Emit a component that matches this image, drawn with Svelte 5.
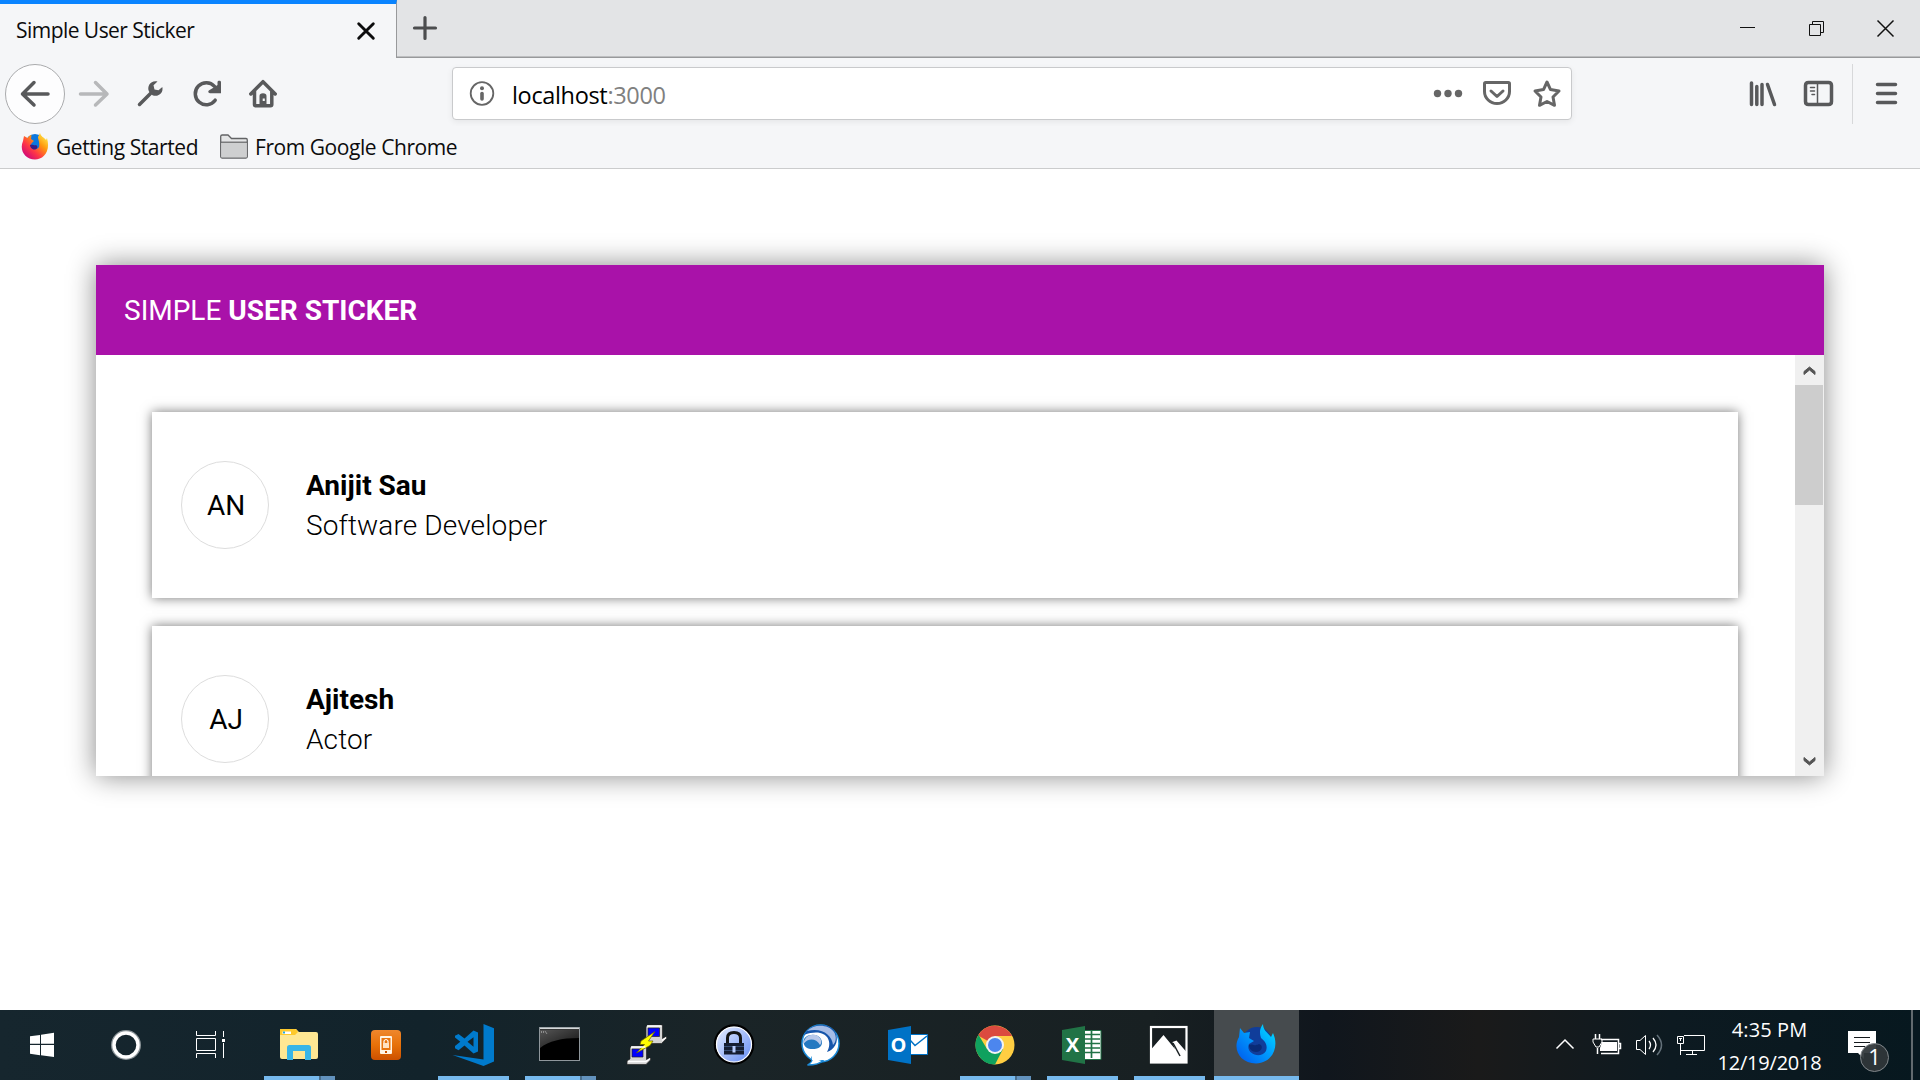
<script>
  const users = [
    { initials: 'AN', name: 'Anijit Sau', role: 'Software Developer' },
    { initials: 'AJ', name: 'Ajitesh', role: 'Actor' }
  ];
</script>

<div class="screen">
  <header class="tabs">
    <div class="tab">
      <span class="tab-title">Simple User Sticker</span>
      <svg class="tab-close" width="20" height="20" viewBox="356 20 20 20"><path d="M358.7 22.7 373.3 37.3M373.3 22.7 358.7 37.3" stroke="#0c0c0d" stroke-width="2.9" stroke-linecap="round" /></svg>
    </div>
    <svg class="new-tab" width="58" height="56" viewBox="397 0 58 56"><path d="M425 17.500V38.500M414.500 28H435.500" stroke="#4c4d4f" stroke-width="3.200" stroke-linecap="round" /></svg>
    <svg class="window-controls" width="200" height="56" viewBox="1720 0 200 56" fill="none" stroke="#111">
      <path d="M1740 27.500H1755M1809.500 24.500H1820.500V35.500H1809.500ZM1812.500 24V21.500H1823.500V32.500H1821" />
      <path d="M1877.500 20.500 1893.500 36.500M1893.500 20.500 1877.500 36.500" stroke-width="1.500" />
    </svg>
  </header>

  <nav class="toolbar">
    <div class="back"><svg width="34" height="34" viewBox="18 77 34 34"><path d="M22.500 94H48M34 82.500 22.500 94 34 105" /></svg></div>
    <svg class="disabled" width="57" height="60" viewBox="65 64 57 60"><path d="M80.500 94H106.500M95.500 82.500 107 94 95.500 105" /></svg>
    <svg width="57" height="60" viewBox="122 64 57 60"><path d="M139.500 104.500 152 92" /><path class="solid" d="M157.500 81.500C151 79.800 146.500 86 149 91.500L152.500 95.200C158 97.500 163.800 93 162.300 87L158.500 90.200 154.500 89.400 153.500 85.200Z" /></svg>
    <svg width="57" height="60" viewBox="179 64 57 60"><path d="M215.200 100.200A11 11 0 1 1 214.500 86.400" /><path class="solid" d="M221 82.200V93.200H210C208 93.200 207.700 91 209.200 90.300L212.500 88.300 217.500 85V82.200C217.500 80.400 221 80.400 221 82.200Z" /></svg>
    <svg width="57" height="60" viewBox="236 64 57 60"><path d="M250.800 94 263 81.700 275.200 94M254.500 91V104.500Q254.500 105.800 255.800 105.800H270.500Q271.800 105.800 271.800 104.500V91" /><path class="solid" fill-rule="evenodd" d="M259.500 105V96Q259.500 93.300 263 93.300T266.500 96V105ZM262.700 98.500H264.800V101H262.700Z" /></svg>
    <div class="address">
      <svg width="60" height="52" viewBox="452 68 60 52" fill="none"><circle cx="482" cy="93.500" r="11.300" class="ring" /><circle cx="482" cy="88.300" r="2" fill="#666" /><path class="stem" d="M482 93.500V99" /></svg>
      <span class="url">localhost<span>:3000</span></span>
      <svg class="actions" width="152" height="52" viewBox="1420 68 152 52">
        <circle cx="1437.500" cy="93.500" r="3.700" fill="#666" /><circle cx="1448" cy="93.500" r="3.700" fill="#666" /><circle cx="1458.500" cy="93.500" r="3.700" fill="#666" />
        <path d="M1485.700 82.500H1508.300Q1509.500 82.500 1509.500 83.700V91.500A12.500 12 0 0 1 1484.500 91.500V83.700Q1484.500 82.500 1485.700 82.500ZM1491 91 1497 96.500 1503 91" />
        <path d="M1547 82 1550.500 89.600 1559 91 1553 97 1554.500 105.300 1547 101.500 1539.500 105.300 1541 97 1535 91 1543.500 89.600Z" stroke-linejoin="round" />
      </svg>
    </div>
    <svg class="library" width="56" height="60" viewBox="1736 64 56 60"><path d="M1751.500 83V104.500M1756.800 86.500V104.500M1762 84.500V104.500M1767.500 84.500 1774.500 104.500" /></svg>
    <svg width="60" height="60" viewBox="1792 64 60 60"><path d="M1808.500 82.500H1828.500Q1831.500 82.500 1831.500 85.500V101.500Q1831.500 104.500 1828.500 104.500H1808.500Q1805.500 104.500 1805.500 101.500V85.500Q1805.500 82.500 1808.500 82.500Z" /><path class="thin" d="M1817.500 83V104M1810.500 87.500H1814.500M1810.500 91H1814.500M1812 94.500H1814.500" /></svg>
    <svg class="menu" width="68" height="60" viewBox="1853 64 67 60"><path d="M1877.500 84.500H1895.500M1877.500 93.500H1895.500M1877.500 102.500H1895.500" /></svg>
  </nav>

  <div class="bookmarks">
    <svg width="28" height="28" viewBox="0 0 28 28">
      <defs><linearGradient id="fox" x1="1" y1=".1" x2=".15" y2="1"><stop offset="0" stop-color="#fff44f" /><stop offset=".35" stop-color="#ff980e" /><stop offset=".65" stop-color="#ff3647" /><stop offset="1" stop-color="#c60084" /></linearGradient></defs>
      <circle cx="14" cy="11.500" r="9.500" fill="#0c78de" />
      <path d="M3 4 6.500 6C8 4 9 3 10.500 3L10 7 13 9C11 11 9 12 10 15 12 18 16 18 18 15 19 11 17 7 17 5L19 1C20 5 23 5 25 8L26 6C30 20 22 27.500 14 27.500 4 27.500-2 18 2 9Z" fill="url(#fox)" />
      <path d="M9 13C12 12 13 14 15 13 17 14 17 17 14 17.500 11 18 9 15 9 13Z" fill="#3a1c82" />
    </svg>
    <span class="started">Getting Started</span>
    <svg class="folder" width="30" height="28" viewBox="219 133 30 28"><path d="M220.700 155V136.500Q220.700 135 222.200 135H228L231.500 138.500H246Q247.300 138.500 247.300 140V156.500Q247.300 158 246 158H222Q220.700 158 220.700 156.500Z" fill="#e4e5e6" stroke="#626365" stroke-width="1.300" /><path d="M221.300 142.500H246.700V157.400H221.300Z" fill="#cecfd0" /><path d="M221 142.200H247" stroke="#626365" stroke-width="1.200" /></svg>
    <span class="chrome-folder">From Google Chrome</span>
  </div>

  <main>
    <section class="panel">
      <h1>SIMPLE <b>USER STICKER</b></h1>
      <div class="body">
        <div class="list">
          {#each users as user}
            <article class="card">
              <div class="avatar">{user.initials}</div>
              <div class="details"><strong>{user.name}</strong><span>{user.role}</span></div>
            </article>
          {/each}
        </div>
        <div class="scrollbar">
          <svg width="29" height="30" viewBox="0 0 29 30"><path d="M9 19.500V16.500L14.500 12 20 16.500V19.500L14.500 15Z" fill="#555" stroke="#555" /></svg>
          <div class="thumb"></div>
          <svg class="down" width="29" height="30" viewBox="0 0 29 30"><path d="M9 11.500V14.500L14.500 19 20 14.500V11.500L14.500 16Z" fill="#555" stroke="#555" /></svg>
        </div>
      </div>
    </section>
  </main>

  <footer class="taskbar">
    <div class="system"><svg width="84" height="66" viewBox="0 1010 84 66"><path fill="#fff" d="M30 1036.300 40 1034.900V1043.700H30ZM41 1034.700 54 1032.800V1043.700H41ZM30 1045H40V1055.200L30 1053.800ZM41 1045H54V1057L41 1055.300Z" /></svg></div>
    <div class="system"><svg width="84" height="66" viewBox="84 1010 84 66" fill="none"><circle cx="126" cy="1045" r="14" stroke="#8b9498" stroke-width="2" /><circle cx="126" cy="1045" r="12" stroke="#fff" stroke-width="3.400" /></svg></div>
    <div class="system last"><svg width="88" height="66" viewBox="168 1010 88 66" fill="none" stroke="#fff"><path d="M196.500 1031V1035.500H215.500V1031M196.500 1038.500H215.500V1050.500H196.500ZM196.500 1058V1053.500H215.500V1058M223.500 1031V1037M223.500 1043V1058" /><path d="M222 1039H225V1042H222Z" fill="#fff" stroke="none" /></svg></div>

    <div class="app open stacked"><svg viewBox="256 1010 87 66">
      <path d="M280 1030Q280 1029 281 1029H296L299 1032H316Q318 1032 318 1034V1057Q318 1059 316 1059H282Q280 1059 280 1057Z" fill="#fee793" />
      <path d="M280 1035V1030Q280 1029 281 1029H295Q297 1029 298 1032L295 1035Z" fill="#fdc92d" /><path d="M282.500 1031.500H291V1034H282.500Z" fill="#fff" /><path d="M283 1031.500H285V1033.500H283Z" fill="#25a9dc" />
      <path d="M287 1060V1047.500Q287 1045 289.500 1045H308.500Q311 1045 311 1047.500V1060H305V1051H293V1060Z" fill="#37b5e8" />
    </svg></div>
    <div class="app"><svg viewBox="343 1010 87 66">
      <defs><linearGradient id="orange" x1="0" y1="0" x2="0" y2="1"><stop offset="0" stop-color="#ef872d" /><stop offset=".5" stop-color="#e77108" /><stop offset="1" stop-color="#cc5000" /></linearGradient></defs>
      <rect x="371" y="1030" width="30" height="30" rx="4" fill="url(#orange)" /><rect x="380" y="1036" width="12" height="18" rx="1" fill="#fff4e4" /><path d="M381.500 1038H390.500V1050H381.500Z" fill="#e8750f" /><path d="M384 1043V1041Q386 1038 388 1041V1043" fill="none" stroke="#fff" stroke-width="1.200" /><path d="M383 1043H389V1048H383Z" fill="#ffe2c2" /><path d="M385 1051H387V1053H385Z" fill="#cb5100" />
    </svg></div>
    <div class="app open"><svg viewBox="430 1010 87 66">
      <path d="M483.500 1024 494 1028.300V1061.500L483.500 1066 452.500 1055 483.500 1059.500Z" fill="#007acc" />
      <path fill-rule="evenodd" d="M473.500 1030.500 478 1032.500V1051.500L473.500 1053.500 464.500 1045.500 458.500 1050.300 455 1048.300V1046L460.300 1041.800 455 1037.500V1035.700L458.500 1034 464.500 1038.500ZM473.500 1037.200 467.500 1041.800 473.500 1046.700Z" fill="#007acc" />
    </svg></div>
    <div class="app open stacked"><svg viewBox="517 1010 87 66">
      <defs><linearGradient id="gloss" x1="0" y1="0" x2="1" y2="1"><stop offset="0" stop-color="#555" /><stop offset="1" stop-color="#111" /></linearGradient></defs>
      <rect x="539.500" y="1027.500" width="40" height="33" fill="#000" stroke="#8f979c" /><path d="M540 1030H579V1038C561 1038 549 1041 540 1048Z" fill="url(#gloss)" /><path d="M540 1028.500H579" stroke="#d4d7d8" stroke-width="1.500" /><path d="M541.500 1031V1033M543.500 1031V1033M545 1031 547 1034" stroke="#aaa" stroke-width=".7" />
    </svg></div>
    <div class="app"><svg viewBox="604 1010 87 66">
      <g stroke="#222" stroke-width=".7">
        <path d="M646 1026.500 648 1025H662.500V1038.500L666.500 1036.500V1038.500L661.500 1043.500H645.500V1040L649 1038H646Z" fill="#d5d5d5" /><path d="M648 1028H659.500V1036.500H648Z" fill="#00f" />
        <path d="M630 1047.500 632 1046H646.500V1059.500L650.500 1058V1060L646 1064.500H627V1061L630 1059Z" fill="#d5d5d5" /><path d="M632 1049H643V1057H632Z" fill="#00f" />
        <path d="M655 1031.500 641 1041 640 1044.500H644.500L636.500 1053 650 1045.500 653 1041H648.500Z" fill="#ff0" stroke="#665f00" />
      </g>
      <path d="M628 1061.500H646L650 1058.500M647 1026H661.500M631 1047H645.500M662 1040.500 666 1037.500" stroke="#fff" stroke-width="1.300" fill="none" />
    </svg></div>
    <div class="app"><svg viewBox="691 1010 87 66">
      <defs><linearGradient id="key" x1="0" y1="0" x2="1" y2="1"><stop offset="0" stop-color="#eef3ff" /><stop offset="1" stop-color="#5d87f3" /></linearGradient></defs>
      <circle cx="734" cy="1044.500" r="19" fill="url(#key)" stroke="#000" stroke-width="2.500" /><circle cx="734" cy="1044.500" r="17.500" fill="none" stroke="#fff" stroke-width="1.200" />
      <path d="M727.500 1044V1038Q727.500 1032.500 734 1032.500T740.500 1038V1044" fill="none" stroke="#141414" stroke-width="3" /><path d="M724 1043H744V1054.500H724Z" fill="#151d31" /><path d="M724 1046.500H744M724 1050.500H744" stroke="#45618f" stroke-width=".7" /><path d="M732.500 1046H735.500V1052.500H732.500Z" fill="#b8cdff" />
    </svg></div>
    <div class="app"><svg viewBox="778 1010 87 66">
      <circle cx="820.500" cy="1043.500" r="18.500" fill="#fff" stroke="#1b8ad8" stroke-width="1.500" />
      <path d="M812 1057.500Q813 1062 807.500 1065 819 1065 823 1060.500Z" fill="#fff" stroke="#1b8ad8" stroke-width="1.300" /><path d="M812 1054H824V1060H812Z" fill="#fff" />
      <path d="M804 1035C812 1021 832 1023 836 1034 839 1042 834 1050 827 1052 834 1040 825 1027 804 1035Z" fill="#1756ab" />
      <path d="M807 1031C814 1024 828 1024 834 1032 837 1037 836 1042 833 1045 832 1035 822 1027 807 1031Z" fill="#a7bde6" />
      <path d="M803.500 1042C803 1036 812 1033 818 1036 824 1040 823 1047 817 1048.500 811 1050 804 1049 803.500 1042Z" fill="#2479c1" /><path d="M803.500 1044C804 1036 812 1033 818 1036 822 1039 822 1043 820 1045 816 1038 808 1038 803.500 1044Z" fill="#b8c9ea" />
    </svg></div>
    <div class="app"><svg viewBox="865 1010 87 66">
      <path d="M909 1034.500H927.500V1054.500H909Z" fill="#fff" stroke="#0072c6" /><path d="M910 1040 915 1045.500 927 1036" fill="none" stroke="#0072c6" stroke-width="1.500" /><path d="M888 1030 911 1026V1064L888 1060Z" fill="#0072c6" /><text x="898.500" y="1051.500" class="office">O</text>
    </svg></div>
    <div class="app open stacked"><svg viewBox="952 1010 87 66">
      <circle cx="995" cy="1045" r="19.500" fill="#ffce42" /><path d="M995 1045 978 1035.500A19.500 19.500 0 0 1 1012 1036H995Z" fill="#db4a3f" /><path d="M978.500 1034.700A19.500 19.500 0 0 0 995 1064.500L1003 1049 987 1049Z" fill="#0fa15e" /><circle cx="995" cy="1045" r="9" fill="#f3f3f3" /><circle cx="995" cy="1045" r="7" fill="#4c86ee" />
    </svg></div>
    <div class="app open"><svg viewBox="1039 1010 87 66">
      <path d="M1084 1030.500H1101V1059.500H1084Z" fill="#fff" stroke="#217346" /><path d="M1084 1034.500H1100M1084 1039H1100M1084 1043.500H1100M1084 1048H1100M1084 1052.500H1100M1091.500 1031V1058" stroke="#217346" stroke-width="1.700" /><path d="M1062 1030 1085 1026V1064L1062 1060Z" fill="#217346" /><text x="1072.500" y="1051.500" class="office">X</text>
    </svg></div>
    <div class="app open"><svg viewBox="1126 1010 87 66">
      <rect x="1151" y="1027" width="35.500" height="35.500" fill="#171e21" stroke="#fff" stroke-width="2.200" /><path d="M1151 1049.500 1163.500 1035 1175 1049 1172.500 1042 1176.500 1040.500 1186.500 1052V1062.500H1151Z" fill="#fff" /><path d="M1173 1043 1180 1056" stroke="#171e21" stroke-width="1.500" />
    </svg></div>
    <div class="app active"><svg viewBox="1213 1010 87 66">
      <defs><linearGradient id="blue" x1="1" y1="0" x2="0" y2="1"><stop offset="0" stop-color="#00e7ff" /><stop offset=".4" stop-color="#00a3ff" /><stop offset="1" stop-color="#0054eb" /></linearGradient></defs>
      <circle cx="1257" cy="1042" r="15" fill="#103d9a" />
      <path d="M1240 1028 1244 1033 1250 1032 1249 1038 1254 1041 1249 1044C1245 1053 1260 1060 1266 1051 1268 1045 1265 1041 1261 1038 1259 1032 1260 1028 1263 1024 1263 1030 1267 1032 1271 1037L1273 1033C1280 1048 1271 1063.500 1256 1063.500 1240 1063.500 1232 1049 1239 1037Z" fill="url(#blue)" />
      <path d="M1249 1045C1253 1043 1254 1047 1259 1044 1264 1045 1262 1052 1256 1052 1252 1052 1249 1049 1249 1045Z" fill="#092b77" />
    </svg></div>

    <svg class="tray" width="168" height="70" viewBox="1544 1010 168 70" fill="none" stroke="#fff">
      <path d="M1556.500 1048.500 1565 1040 1573.500 1048.500" stroke-width="1.500" />
      <path d="M1601 1039.500H1618.500V1053.500H1601M1619 1043.500H1620.500V1048.500H1619M1595.500 1034V1039M1599.500 1034V1039M1597.500 1048V1054" stroke-width="1.500" /><path d="M1593 1039H1602V1042L1599 1047H1596L1593 1042Z" /><path d="M1602 1042H1617V1051H1600V1048Z" fill="#fff" stroke="none" />
      <path d="M1636.500 1040.500H1640L1645.500 1035.500V1054.500L1640 1049.500H1636.500Z" /><path d="M1649 1041Q1652 1045 1649 1049M1653 1038Q1659 1045 1653 1052" stroke-width="1.300" /><path d="M1657 1035Q1666 1045 1657 1055" stroke="#64717a" stroke-width="1.500" />
      <path d="M1684 1035.500H1704.500V1050.500H1681M1692.500 1051V1054M1686 1054.500H1697M1677.500 1036.500H1683.500V1043.500H1677.500ZM1680.500 1044V1055M1679 1038.500H1682M1680.500 1038V1041" />
    </svg>
    <div class="clock"><span class="time">4:35 PM</span><span class="date">12/19/2018</span></div>
    <svg class="notice" width="80" height="70" viewBox="1830 1010 80 70"><path d="M1848 1031H1876V1053H1864V1059L1858 1053H1848Z" fill="#fff" /><path d="M1854 1037.500H1870M1854 1042.500H1870M1854 1046.500H1865" stroke="#14191c" stroke-width="1.200" /><circle cx="1874.500" cy="1057.500" r="14" fill="#303639" fill-opacity=".94" stroke="#81878b" /><text x="1874.500" y="1064.500">1</text></svg>
    <div class="desktop-edge"></div>
  </footer>
</div>

<style>
  :global(body) { margin: 0; }
  * { box-sizing: border-box; }
  svg { display: block; flex: none; }
  .screen { width: 1920px; height: 1080px; display: flex; flex-direction: column; overflow: hidden; background: #fff; font-family: "Open Sans", "Noto Sans", sans-serif; color: #0c0c0d; }
  .tabs { height: 58px; flex: none; display: flex; background: #e3e4e6; box-shadow: inset 0 -1px #98999b, inset 0 -2px #bdbec0; }
  .tab { width: 397px; height: 58px; border-top: 4px solid #0a84ff; border-right: 1px solid #98999b; background: #f5f6f8; display: flex; align-items: center; padding: 0 20px 2px 16px; }
  .tab-title { flex: 1; font-size: 21px; letter-spacing: -.54px; white-space: nowrap; }
  .tab-close { margin-top: 1px; }
  .window-controls { margin-left: auto; }
  .toolbar { height: 68px; padding: 6px 0 0 5px; flex: none; display: flex; align-items: flex-start; background: #f5f6f8; }
  .toolbar svg { fill: none; stroke: #58595b; stroke-width: 3.500; stroke-linecap: round; stroke-linejoin: round; }
  .toolbar .disabled { stroke: #b7b8ba; }
  .toolbar .solid { fill: #58595b; stroke: none; }
  .back { width: 60px; height: 60px; border: 1px solid #aaabad; border-radius: 50%; background: #fdfdfe; display: grid; place-items: center; }
  .address { width: 1120px; height: 53px; margin: 3px 0 0 159px; border: 1px solid #c9cacc; border-radius: 4px; box-shadow: 0 2px 6px #0001; background: #fff; display: flex; align-items: center; }
  .address svg { stroke: #666; stroke-width: 3; margin-left: -1px; }
  .address svg:first-child { stroke: none; }
  .address .ring { stroke: #666; stroke-width: 1.8; }
  .address .stem { stroke: #666; stroke-width: 3.6; }
  .url { padding-top: 2px; font-size: 23.500px; letter-spacing: -.34px; color: #000; }
  .url span { color: #808080; }
  .address .actions { margin: 0 -1px 0 auto; }
  .address .actions circle { stroke: none; }
  .library { margin-left: 164px; }
  .toolbar .thin { stroke-width: 1.500; }
  .menu { margin-left: auto; border-left: 1px solid #d7d8da; }
  .bookmarks { height: 43px; flex: none; display: flex; align-items: flex-start; padding: 6px 0 0 21px; background: #f5f6f8; border-bottom: 1px solid #cbcccd; font-size: 21px; line-height: 31px; white-space: nowrap; }
  .started { width: 163px; margin-left: 7px; letter-spacing: -.42px; }
  .folder { margin-top: 1px; }
  .chrome-folder { margin-left: 6px; letter-spacing: -.44px; }
  main { flex: 1; padding: 96px 96px 0; }
  .panel { height: 511px; background: #fff; box-shadow: 0 0 26px #888; display: flex; flex-direction: column; font-family: Roboto, sans-serif; font-size: 28px; color: #000; }
  h1 { height: 90px; flex: none; margin: 0; padding-left: 28px; background: #a912a9; color: #fff; display: flex; gap: 7px; align-items: center; font-size: 28px; font-weight: 400; }
  h1 b { font-weight: 700; }
  .body { flex: 1; min-height: 0; display: flex; overflow: hidden; }
  .list { flex: 1; padding: 57px 57px 0 56px; overflow: hidden; }
  .card { height: 186px; margin-bottom: 28px; padding-left: 29px; display: flex; align-items: center; background: #fff; box-shadow: 0 0 11px #777; }
  .avatar { width: 88px; height: 88px; border: 1px solid #ddd; border-radius: 50%; display: grid; place-items: center; padding: 1px 0 0 2px; }
  .details { margin-left: 37px; padding-top: 2px; display: flex; flex-direction: column; line-height: 40px; font-weight: 300; letter-spacing: .12px; }
  .details strong { font-weight: 700; letter-spacing: 0; }
  .scrollbar { width: 29px; background: #f0f0f0; display: flex; flex-direction: column; }
  .thumb { width: 28px; height: 120px; background: #cdcdcd; }
  .down { margin-top: auto; }
  .taskbar { height: 70px; flex: none; display: flex; background: linear-gradient(90deg, #16262e, #12232b 22%, #1a2427 38%, #182022 60%, #10161d 69%, #1a1a1a 77%, #0d1a21 87%, #07181f); color: #fff; }
  .system { width: 84px; flex: none; }
  .last { width: 88px; }
  .app { width: 87px; height: 70px; flex: none; display: flex; flex-direction: column; align-items: center; }
  .app svg { width: 87px; height: 66px; }
  .open::after { content: ""; width: 71px; height: 4px; background: #76b9ed; }
  .stacked::after { background: linear-gradient(90deg, #76b9ed 55px, #486d8c 55px, #486d8c 57px, #6292bd 57px); }
  .active { background: linear-gradient(#464b4e, #464b4e) 1px 0 / 85px 70px no-repeat; }
  .active::after { content: ""; width: 85px; height: 4px; background: #76b9ed; }
  .office { font: 700 20px "Open Sans", sans-serif; fill: #fff; text-anchor: middle; }
  .tray { margin-left: 244px; }
  .clock { width: 118px; display: flex; flex-direction: column; align-items: center; padding: 3px 3px 0 0; font-size: 20px; line-height: 33px; white-space: nowrap; }
  .time { letter-spacing: .1px; }
  .date { letter-spacing: -.2px; }
  .notice text { font: 22px "Open Sans", sans-serif; fill: #fff; text-anchor: middle; }
  .desktop-edge { width: 2px; margin-left: 1px; background: #626a6e; }
</style>
